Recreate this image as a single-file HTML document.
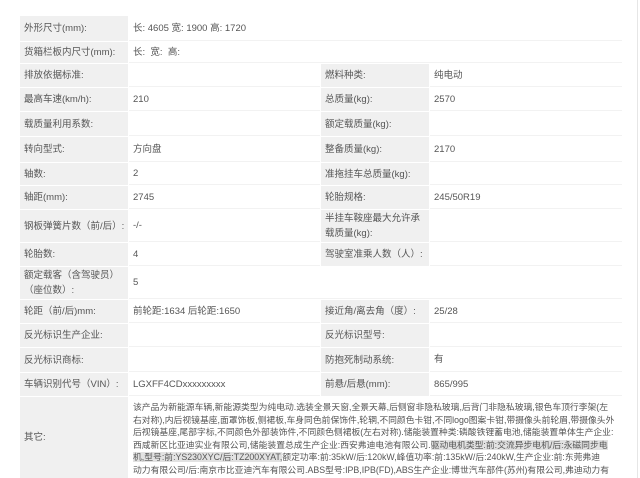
<!DOCTYPE html>
<html><head><meta charset="utf-8"><style>
body{margin:0;width:640px;height:478px;overflow:hidden;background:#fff;font-family:"Liberation Sans","Noto Sans CJK SC",sans-serif;color:#555;font-size:9.5px;position:relative}
.r{position:absolute;left:20px;width:602px;}
.c{position:absolute;top:0;bottom:1px;display:flex;align-items:center;box-sizing:border-box;padding-left:4px;line-height:15px}
.g{background:#f0f0f0}
.w{background:#fff;border-bottom:1px solid #f2f2f2}
.a{left:0;width:108px}.b{left:109px;width:191px}.d{left:301px;width:108px}.e{left:410px;width:192px}
.bw{left:109px;width:493px}
.vl{position:absolute;left:637px;top:0;width:1px;height:478px;background:#e6e6e6}
.o{position:absolute;left:133px;top:401px;line-height:12.6px;white-space:nowrap;font-size:8.8px}
.hl{background:#e2e2e2}
</style></head><body>
<div class="vl"></div>
<div class="r" style="top:16px;height:26px"><div class="c g a">外形尺寸(mm):</div><div class="c w bw">长: 4605 宽: 1900 高: 1720</div></div>
<div class="r" style="top:42px;height:22px"><div class="c g a">货箱栏板内尺寸(mm):</div><div class="c w bw">长:&nbsp; 宽:&nbsp; 高:</div></div>
<div class="r" style="top:64px;height:24px"><div class="c g a">排放依据标准:</div><div class="c w b"></div><div class="c g d">燃料种类:</div><div class="c w e">纯电动</div></div>
<div class="r" style="top:88px;height:24px"><div class="c g a">最高车速(km/h):</div><div class="c w b">210</div><div class="c g d">总质量(kg):</div><div class="c w e">2570</div></div>
<div class="r" style="top:112px;height:25px"><div class="c g a">载质量利用系数:</div><div class="c w b"></div><div class="c g d">额定载质量(kg):</div><div class="c w e"></div></div>
<div class="r" style="top:137px;height:26px"><div class="c g a">转向型式:</div><div class="c w b">方向盘</div><div class="c g d">整备质量(kg):</div><div class="c w e">2170</div></div>
<div class="r" style="top:163px;height:23px"><div class="c g a">轴数:</div><div class="c w b">2</div><div class="c g d">准拖挂车总质量(kg):</div><div class="c w e"></div></div>
<div class="r" style="top:186px;height:24px"><div class="c g a">轴距(mm):</div><div class="c w b">2745</div><div class="c g d">轮胎规格:</div><div class="c w e">245/50R19</div></div>
<div class="r" style="top:210px;height:33px"><div class="c g a">钢板弹簧片数（前/后）:</div><div class="c w b">-/-</div><div class="c g d">半挂车鞍座最大允许承载质量(kg):</div><div class="c w e"></div></div>
<div class="r" style="top:243px;height:24px"><div class="c g a">轮胎数:</div><div class="c w b">4</div><div class="c g d">驾驶室准乘人数（人）:</div><div class="c w e"></div></div>
<div class="r" style="top:267px;height:33px"><div class="c g a">额定载客（含驾驶员）（座位数）:</div><div class="c w bw">5</div></div>
<div class="r" style="top:300px;height:24px"><div class="c g a">轮距（前/后)mm:</div><div class="c w b">前轮距:1634 后轮距:1650</div><div class="c g d">接近角/离去角（度）:</div><div class="c w e">25/28</div></div>
<div class="r" style="top:324px;height:24px"><div class="c g a">反光标识生产企业:</div><div class="c w b"></div><div class="c g d">反光标识型号:</div><div class="c w e"></div></div>
<div class="r" style="top:348px;height:25px"><div class="c g a">反光标识商标:</div><div class="c w b"></div><div class="c g d">防抱死制动系统:</div><div class="c w e">有</div></div>
<div class="r" style="top:373px;height:24px"><div class="c g a">车辆识别代号（VIN）:</div><div class="c w b">LGXFF4CDxxxxxxxxx</div><div class="c g d">前悬/后悬(mm):</div><div class="c w e">865/995</div></div>
<div class="r" style="top:397px;height:81px"><div class="c g a" style="bottom:0">其它:</div><div class="c bw" style="bottom:0"></div></div>
<div class="o">该产品为新能源车辆,新能源类型为纯电动.选装全景天窗,全景天幕,后侧窗非隐私玻璃,后背门非隐私玻璃,银色车顶行李架(左<br>右对称),内后视镜基座,面罩饰板,侧裙板,车身同色前保饰件,轮辋,不同颜色卡钳,不同logo图案卡钳,带摄像头前轮眉,带摄像头外<br>后视镜基座,尾部字标,不同颜色外部装饰件,不同颜色侧裙板(左右对称).储能装置种类:磷酸铁锂蓄电池,储能装置单体生产企业:<br>西咸新区比亚迪实业有限公司,储能装置总成生产企业:西安弗迪电池有限公司.<span class="hl">驱动电机类型:前:交流异步电机/后:永磁同步电</span><br><span class="hl">机,型号:前:YS230XYC/后:TZ200XYAT,</span>额定功率:前:35kW/后:120kW,峰值功率:前:135kW/后:240kW,生产企业:前:东莞弗迪<br>动力有限公司/后:南京市比亚迪汽车有限公司.ABS型号:IPB,IPB(FD),ABS生产企业:博世汽车部件(苏州)有限公司,弗迪动力有</div>
</body></html>
